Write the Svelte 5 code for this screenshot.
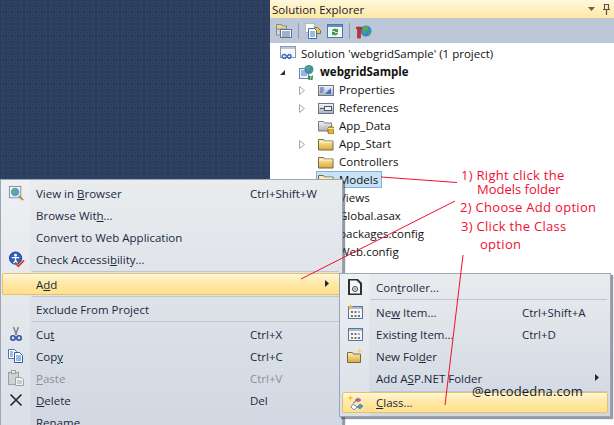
<script>
  const tree = [
    { icon: 'properties', label: 'Properties', arrow: true },
    { icon: 'references', label: 'References', arrow: true },
    { icon: 'data', label: 'App_Data' },
    { icon: 'folder', label: 'App_Start', arrow: true },
    { icon: 'folder', label: 'Controllers' },
    { icon: 'folder', label: 'Models', selected: true },
    { icon: 'folder', label: 'Views' },
    { icon: 'none', label: 'Global.asax' },
    { icon: 'none', label: 'packages.config' },
    { icon: 'none', label: 'Web.config' }
  ];
</script>

{#snippet folder()}
  <svg width="16" height="16" viewBox="0 0 16 16">
    <path d="M0.500 3.500h5l1 1.500h8.500v9H0.500z" fill="url(#gold)" stroke="#77694a" />
    <path d="M1.500 6h13" stroke="#fff6d0" />
  </svg>
{/snippet}

{#snippet treeIcon(name)}
  {#if name === 'properties'}
    <svg width="16" height="16" viewBox="0 0 16 16">
      <rect x="0.500" y="3.500" width="15" height="10" fill="url(#steel)" stroke="#6d7685" />
      <path d="M2 6h4M2 8h4M2 10h3" stroke="#2c5fb5" />
      <path d="M7 12l6-6v6z" fill="#3a72d8" />
    </svg>
  {:else if name === 'references'}
    <svg width="16" height="16" viewBox="0 0 16 16">
      <rect x="0.500" y="3.500" width="15" height="10" fill="url(#steel)" stroke="#6d7685" />
      <rect x="6.500" y="6.500" width="7" height="4" fill="#eef3f8" stroke="#4b5a70" />
      <path d="M2 8.500h4" stroke="#4b5a70" />
    </svg>
  {:else if name === 'data'}
    <svg width="16" height="16" viewBox="0 0 16 16">
      <path d="M0.500 3.500h5l1 1.500h7v8h-13z" fill="url(#steel)" stroke="#7b7b7b" />
      <rect x="10" y="9" width="6" height="7" rx="1.500" fill="#e3b030" stroke="#8a6a18" />
      <path d="M10 10.500h6" stroke="#f8e39a" />
    </svg>
  {:else if name === 'folder'}
    {@render folder()}
  {/if}
{/snippet}

{#snippet menuIcon(name)}
  {#if name === 'browser'}
    <svg width="17" height="17" viewBox="0 0 18 18">
      <rect x="1.500" y="1.500" width="12" height="12" fill="#f2f5f8" stroke="#7f8ea3" />
      <circle cx="7.500" cy="7.500" r="4.500" fill="#5d9ad8" />
      <path d="M5 5.500l3-1 1 2-2 3-2-1zM9 9l2-1 0.500 2z" fill="#6fb24a" />
      <path d="M11.500 11.500l4.500 4.500" stroke="#b58a3a" stroke-width="2" />
    </svg>
  {:else if name === 'check'}
    <svg width="17" height="17" viewBox="0 0 18 18">
      <circle cx="8" cy="7.500" r="6.500" fill="#2f62c0" stroke="#1d3f8c" />
      <circle cx="8" cy="4.500" r="1.500" fill="#fff" />
      <path d="M4 7h8M8 7v3l-2 3M8 10l2 3" stroke="#fff" stroke-width="1.300" fill="none" />
      <path d="M8 13l3 3 6-6" stroke="#d9412b" stroke-width="2" fill="none" />
    </svg>
  {:else if name === 'cut'}
    <svg width="16" height="16" viewBox="0 0 16 16">
      <path d="M5.500 1l3 8M10.500 1l-3 8" stroke="#7b8590" stroke-width="1.500" />
      <circle cx="5" cy="12" r="2.200" fill="none" stroke="#2b4fa8" stroke-width="1.600" />
      <circle cx="11" cy="12" r="2.200" fill="none" stroke="#2b4fa8" stroke-width="1.600" />
    </svg>
  {:else if name === 'copy'}
    <svg width="16" height="16" viewBox="0 0 16 16">
      <path d="M0.500 1.500h6l2 2v7h-8z" fill="#fff" stroke="#4a75b5" />
      <path d="M6.500 4.500h5l3 3v7h-8z" fill="#fff" stroke="#2f5da8" />
      <path d="M2 4h3M2 6h3M2 8h3M8 8h5M8 10h5M8 12h5" stroke="#3f78c8" />
    </svg>
  {:else if name === 'paste'}
    <svg width="16" height="16" viewBox="0 0 16 16">
      <rect x="0.500" y="2.500" width="10" height="12" fill="#cfd2d5" stroke="#9a9da1" />
      <rect x="3.500" y="0.500" width="4" height="3" fill="#e6e8ea" stroke="#9a9da1" />
      <path d="M7.500 7.500h6l2 2v6h-8z" fill="#eef0f2" stroke="#a0a3a6" />
      <path d="M9 11h5M9 13h5" stroke="#a8abae" />
    </svg>
  {:else if name === 'delete'}
    <svg width="16" height="16" viewBox="0 0 16 16">
      <path d="M2.500 2.500l11 11M13.500 2.500l-11 11" stroke="#2a2a2a" stroke-width="1.700" />
    </svg>
  {:else if name === 'controller'}
    <svg width="14" height="16" viewBox="0 0 14 16">
      <path d="M1 0.500h8l4 4v11H1z" fill="#f4f5f6" stroke="#2c3036" stroke-width="2" />
      <circle cx="7" cy="10" r="2.500" fill="none" stroke="#3c4048" />
      <circle cx="7" cy="10" r="0.800" fill="#3c4048" />
    </svg>
  {:else if name === 'newitem' || name === 'existing'}
    <svg width="16" height="16" viewBox="0 0 16 16">
      <rect x="1.500" y="2.500" width="14" height="12" fill="#f4f6fa" stroke="#5d7499" />
      <rect x="2" y="3" width="13" height="2" fill="#a9bdd8" />
      <rect x="4" y="7" width="2" height="2" fill="#d84a3a" />
      <rect x="7.500" y="7" width="2" height="2" fill="#3f7fd0" />
      <rect x="11" y="7" width="2" height="2" fill="#e0a82e" />
      <rect x="4" y="11" width="2" height="2" fill="#45a04a" />
      <rect x="7.500" y="11" width="2" height="2" fill="#d84a3a" />
      <rect x="11" y="11" width="2" height="2" fill="#3f7fd0" />
      {#if name === 'newitem'}
        <path d="M3.500 0l0.800 2.200 2.200 0.800-2.200 0.800-0.800 2.200-0.800-2.200-2.200-0.800 2.200-0.800z" fill="#f2c526" />
      {/if}
    </svg>
  {:else if name === 'newfolder'}
    <svg width="16" height="16" viewBox="0 0 16 16">
      <path d="M0.500 4.500h5l1 1.500h7v8.500h-13z" fill="url(#gold)" stroke="#77694a" />
      <path d="M12.500 0l0.800 2.200 2.200 0.800-2.200 0.800-0.800 2.200-0.800-2.200-2.200-0.800 2.200-0.800z" fill="#f7d84a" />
    </svg>
  {:else if name === 'class'}
    <svg width="16" height="16" viewBox="0 0 16 16">
      <path d="M3.500 0l0.800 2.200 2.200 0.800-2.200 0.800-0.800 2.200-0.800-2.200-2.200-0.800 2.200-0.800z" fill="#eec22a" />
      <path d="M11 3l3 2-3 2-3-2z" fill="#b05cc8" stroke="#7f3c98" stroke-width="0.500" />
      <path d="M6 9l4 3-3 3-3-3z" fill="#fff" stroke="#6d8fb8" />
      <path d="M13 9l3 2-3 3-3-2z" fill="#5a8fd8" stroke="#2f5da8" stroke-width="0.500" />
      <path d="M6 8l3-2" stroke="#5a6f8f" />
    </svg>
  {/if}
{/snippet}

{#snippet row(icon, label, shortcut = '', extra = '')}
  <div class="row {extra}">
    <span class="gutter">{@render menuIcon(icon)}</span>
    <span class="label">{@render label()}</span>
    <span class="shortcut">{shortcut}</span>
  </div>
{/snippet}

<div class="page">
  <svg class="defs" width="0" height="0">
    <defs>
      <linearGradient id="gold" x1="0" y1="0" x2="0" y2="1">
        <stop offset="0" stop-color="#fdf0b8" />
        <stop offset="1" stop-color="#dba935" />
      </linearGradient>
      <linearGradient id="steel" x1="0" y1="0" x2="0" y2="1">
        <stop offset="0" stop-color="#f4f5f7" />
        <stop offset="1" stop-color="#a9afb8" />
      </linearGradient>
    </defs>
  </svg>

  <div class="explorer">
    <div class="titlebar">
      <span>Solution Explorer</span>
      <svg width="24" height="16" viewBox="0 0 24 16">
        <path d="M1 6h7l-3.500 4z" fill="#6d6148" />
        <path d="M17.500 3.500h4v5h-4zM16 8.500h7M19.500 9v5" fill="none" stroke="#5c5240" stroke-width="1.200" />
      </svg>
    </div>
    <div class="toolbar">
      <svg width="16" height="16" viewBox="0 0 16 16">
        <path d="M0.500 1.500h5l1 1.500h4v3h-10z" fill="#e9d48f" stroke="#8a8a7a" />
        <path d="M0.500 6v6h4" fill="#ddd" stroke="#8a8a7a" />
        <rect x="4.500" y="6.500" width="11" height="8" fill="#f5f7fb" stroke="#5d7499" />
        <path d="M6 9h8M6 11h8M6 13h8" stroke="#4d6a98" />
      </svg>
      <i class="tool-sep"></i>
      <svg width="16" height="16" viewBox="0 0 16 16">
        <rect x="0.500" y="0.500" width="9" height="9" fill="#fff" stroke="#8a8f98" stroke-dasharray="1 1" />
        <path d="M9.500 4.500h3l3 3v3h-6z" fill="#f0c850" stroke="#87703a" />
        <path d="M3.500 5.500h6l2 2v8h-8z" fill="#fff" stroke="#3f6aa8" />
        <path d="M5 9h5M5 11h5M5 13h5" stroke="#3f78c8" />
      </svg>
      <svg width="16" height="16" viewBox="0 0 16 16">
        <rect x="0.500" y="1.500" width="15" height="13" fill="#f4f8fc" stroke="#4f76a8" />
        <rect x="1" y="2" width="14" height="2" fill="#5f8fcb" />
        <path d="M5 8a3 3 0 0 1 5-1.500l1-1v3.500h-3.500l1-1a2 2 0 0 0-2.500 0.500zM11 10a3 3 0 0 1-5 1.500l-1 1v-3.500h3.500l-1 1a2 2 0 0 0 2.500-0.500z" fill="#3c9a34" />
      </svg>
      <i class="tool-sep"></i>
      <svg width="16" height="16" viewBox="0 0 16 16">
        <circle cx="10" cy="8" r="5.500" fill="#3f86c8" />
        <path d="M7 5l4-2 2 3-3 2-1 3-2-2zM12 10l2-1-1 3z" fill="#5dab45" />
        <path d="M0.500 4h5v2h-1v9h-3v-9h-1z" fill="#c8302a" stroke="#7f1d18" stroke-width="0.500" />
      </svg>
    </div>
    <div class="tree">
      <div class="node solution">
        <svg width="16" height="16" viewBox="0 0 16 16">
          <rect x="0.500" y="0.500" width="15" height="11" fill="#f6f8fc" stroke="#8a9cba" />
          <rect x="1" y="1" width="14" height="2" fill="#b9c8e0" />
          <path d="M3 12a2 2 0 1 1 3-2.500l3 3a2 2 0 1 0 0-4l-3 3a2 2 0 0 1-3 0.500z" fill="none" stroke="#3f6fc8" stroke-width="1.500" />
        </svg>
        <span class="text">Solution 'webgridSample' (1 project)</span>
      </div>
      <div class="node project">
        <svg class="expand" width="7" height="7" viewBox="0 0 7 7"><path d="M6 1v5H1z" fill="#333" /></svg>
        <svg width="16" height="16" viewBox="0 0 16 16">
          <rect x="0.500" y="4.500" width="9" height="10" fill="#eef2f8" stroke="#6d86ad" />
          <path d="M2 7h6M2 9h6M2 11h6" stroke="#3f78c8" />
          <circle cx="10" cy="5.500" r="4.500" fill="#3f86c8" />
          <path d="M8 2l4 0-1 3-2 3-2-3zM12 6l2-1-1 3z" fill="#5dab45" />
          <path d="M9 13h5M9 15h5M11 11.500l-1 4.500M13.500 11.500l-1 4.500" stroke="#1f8a3a" />
        </svg>
        <strong class="text">webgridSample</strong>
      </div>
      {#each tree as item}
        <div class="node child" class:selected={item.selected}>
          {#if item.arrow}
            <svg class="expand" width="6" height="9" viewBox="0 0 6 9"><path d="M0.500 0.500l5 4-5 4z" fill="#fff" stroke="#a6a6a6" /></svg>
          {/if}
          <span class="tree-icon">{@render treeIcon(item.icon)}</span>
          <span class="text">{item.label}</span>
        </div>
      {/each}
    </div>
  </div>

  <div class="menu main-menu">
    {@render row('browser', viewBrowser, 'Ctrl+Shift+W')}
    {@render row('', browseWith)}
    {@render row('', convert)}
    {@render row('check', checkAcc)}
    <div class="sep"></div>
    <div class="row hot">
      <span class="gutter"></span>
      <span class="label">A<u>d</u>d</span>
      <svg class="sub-arrow" width="4" height="7" viewBox="0 0 4 7"><path d="M0 0l4 3.500-4 3.500z" fill="#1b293e" /></svg>
    </div>
    <div class="sep"></div>
    {@render row('', exclude)}
    <div class="sep"></div>
    {@render row('cut', cut, 'Ctrl+X')}
    {@render row('copy', copy, 'Ctrl+C')}
    {@render row('paste', paste, 'Ctrl+V', 'disabled')}
    {@render row('delete', del, 'Del')}
    {@render row('', rename)}
  </div>

  <div class="menu sub-menu">
    {@render row('controller', controller)}
    <div class="sep"></div>
    {@render row('newitem', newItem, 'Ctrl+Shift+A')}
    {@render row('existing', existing, 'Ctrl+D')}
    {@render row('newfolder', newFolder)}
    <div class="row">
      <span class="gutter"></span>
      <span class="label">Add A<u>S</u>P.NET Folder</span>
      <svg class="sub-arrow" width="4" height="7" viewBox="0 0 4 7"><path d="M0 0l4 3.500-4 3.500z" fill="#1b293e" /></svg>
    </div>
    <div class="sep last"></div>
    <div class="row hot">
      <span class="gutter">{@render menuIcon('class')}</span>
      <span class="label"><u>C</u>lass...</span>
    </div>
  </div>

  <svg class="pointers" width="614" height="425" viewBox="0 0 614 425">
    <path d="M381 177L457 182.500M301 279L455 201M463 255L445 405" fill="none" stroke="#f01030" />
  </svg>

  <div class="note n1">1) Right click the</div>
  <div class="note n1b">Models folder</div>
  <div class="note n2">2) Choose Add option</div>
  <div class="note n3">3) Click the Class</div>
  <div class="note n3b">option</div>
  <div class="credit">@encodedna.com</div>
</div>

{#snippet viewBrowser()}View in <u>B</u>rowser{/snippet}
{#snippet browseWith()}Browse Wit<u>h</u>...{/snippet}
{#snippet convert()}Convert to Web Application{/snippet}
{#snippet checkAcc()}Check Accessi<u>b</u>ility...{/snippet}
{#snippet exclude()}Exclude From Pro<u>j</u>ect{/snippet}
{#snippet cut()}Cu<u>t</u>{/snippet}
{#snippet copy()}Cop<u>y</u>{/snippet}
{#snippet paste()}<u>P</u>aste{/snippet}
{#snippet del()}<u>D</u>elete{/snippet}
{#snippet rename()}Rena<u>m</u>e{/snippet}
{#snippet controller()}Con<u>t</u>roller...{/snippet}
{#snippet newItem()}Ne<u>w</u> Item...{/snippet}
{#snippet existing()}Existin<u>g</u> Item...{/snippet}
{#snippet newFolder()}New Fol<u>d</u>er{/snippet}

<style>
  :global(body) {
    margin: 0;
  }

  .page {
    position: relative;
    width: 614px;
    height: 425px;
    overflow: hidden;
    display: flex;
    justify-content: flex-end;
    font-family: "Open Sans", "Noto Sans", sans-serif;
    font-size: 11.5px;
    color: #1b293e;
    background-color: #2b3c5c;
    background-image: radial-gradient(circle at 3px 3px, transparent 1px, #31466b 1.3px 1.9px, transparent 2.4px);
    background-size: 6px 6px;
  }

  .defs {
    position: absolute;
  }

  .explorer {
    width: 344px;
    height: 100%;
    background: #fff;
  }

  .titlebar {
    height: 18px;
    display: flex;
    align-items: center;
    justify-content: space-between;
    padding: 0 3px 0 2px;
    background: linear-gradient(#fff8dc, #ffe8a6);
    color: #1a1a1a;
  }

  .toolbar {
    height: 25px;
    display: flex;
    align-items: center;
    gap: 6px;
    padding-left: 6px;
    background: #bcc7d8;
  }

  .tool-sep {
    width: 1px;
    height: 16px;
    background: #8f9db3;
  }

  .tree {
    padding-top: 2px;
    color: #111;
  }

  .node {
    height: 18px;
    display: flex;
    align-items: center;
    gap: 5px;
    position: relative;
  }

  .text {
    padding-bottom: 2px;
  }

  .solution {
    padding-left: 10px;
  }

  .project {
    padding-left: 29px;
  }

  .project strong {
    font-weight: 700;
  }

  .project .expand {
    position: absolute;
    left: 9px;
    top: 6px;
  }

  .child {
    padding-left: 48px;
  }

  .child .expand {
    position: absolute;
    left: 29px;
    top: 5px;
  }

  .tree-icon {
    width: 16px;
    height: 16px;
    flex: none;
  }

  .selected::before {
    content: "";
    position: absolute;
    left: 46px;
    top: 0;
    width: 64px;
    height: 15px;
    background: #c8e2f5;
    border: 1px solid #7fb4dc;
  }

  .selected > * {
    position: relative;
  }

  .menu {
    position: absolute;
    box-sizing: border-box;
    border: 1px solid #9ba7b7;
    box-shadow: 2px 2px 1px rgba(60, 70, 85, 0.55);
    background:
      linear-gradient(90deg, rgba(255, 255, 255, 0.22) 0 29px, transparent 29px),
      linear-gradient(#e9ecee, #d0d7e2);
    color: #1b293e;
  }

  .main-menu {
    left: 0;
    top: 179px;
    width: 343px;
    height: 262px;
    padding-top: 2px;
  }

  .sub-menu {
    left: 339px;
    top: 273px;
    width: 272px;
    height: 144px;
    padding-top: 2px;
  }

  .row {
    height: 22px;
    display: flex;
    align-items: center;
    position: relative;
    box-sizing: border-box;
  }

  .gutter {
    width: 30px;
    height: 100%;
    margin-right: 5px;
    flex: none;
    display: flex;
    align-items: center;
    justify-content: center;
  }

  .label {
    width: 214px;
    flex: none;
  }

  .sub-menu .label {
    width: 146px;
  }

  .sub-menu .gutter {
    margin-right: 6px;
  }

  .shortcut {
    white-space: nowrap;
  }

  .disabled {
    color: #8b9198;
  }

  .hot {
    margin: 0 1px;
    background: linear-gradient(#fff8e0, #ffe9a8 45%, #ffe08a);
    outline: 1px solid #e5c365;
    outline-offset: -1px;
    border-radius: 2px;
  }

  .hot .gutter {
    margin-left: -1px;
  }

  .sub-menu .hot {
    height: 21px;
    margin: 0 2px;
  }

  .sub-menu .hot .gutter {
    margin-left: -2px;
  }

  .sub-arrow {
    position: absolute;
    right: 12px;
    top: 7px;
  }

  .sub-menu .sub-arrow {
    right: 11px;
  }

  .sep {
    height: 1px;
    margin: 1px 3px 1px 31px;
    background: #bec6d2;
  }

  .sub-menu .sep {
    margin-left: 31px;
  }

  .sub-menu .sep.last {
    margin-top: 2px;
    margin-bottom: 0;
  }

  .pointers {
    position: absolute;
    left: 0;
    top: 0;
  }

  .note {
    position: absolute;
    color: #f01030;
    font-size: 13px;
    line-height: 14px;
    white-space: nowrap;
    letter-spacing: 0.3px;
  }

  .n1 { left: 461px; top: 168px; }
  .n1b { left: 477px; top: 182px; letter-spacing: 0; }
  .n2 { left: 460px; top: 200px; }
  .n3 { left: 461px; top: 219px; }
  .n3b { left: 480px; top: 237px; }

  .credit {
    position: absolute;
    left: 472px;
    top: 382px;
    font-size: 13px;
    line-height: 18px;
    letter-spacing: 0.15px;
    color: #1a1a1a;
  }
</style>
